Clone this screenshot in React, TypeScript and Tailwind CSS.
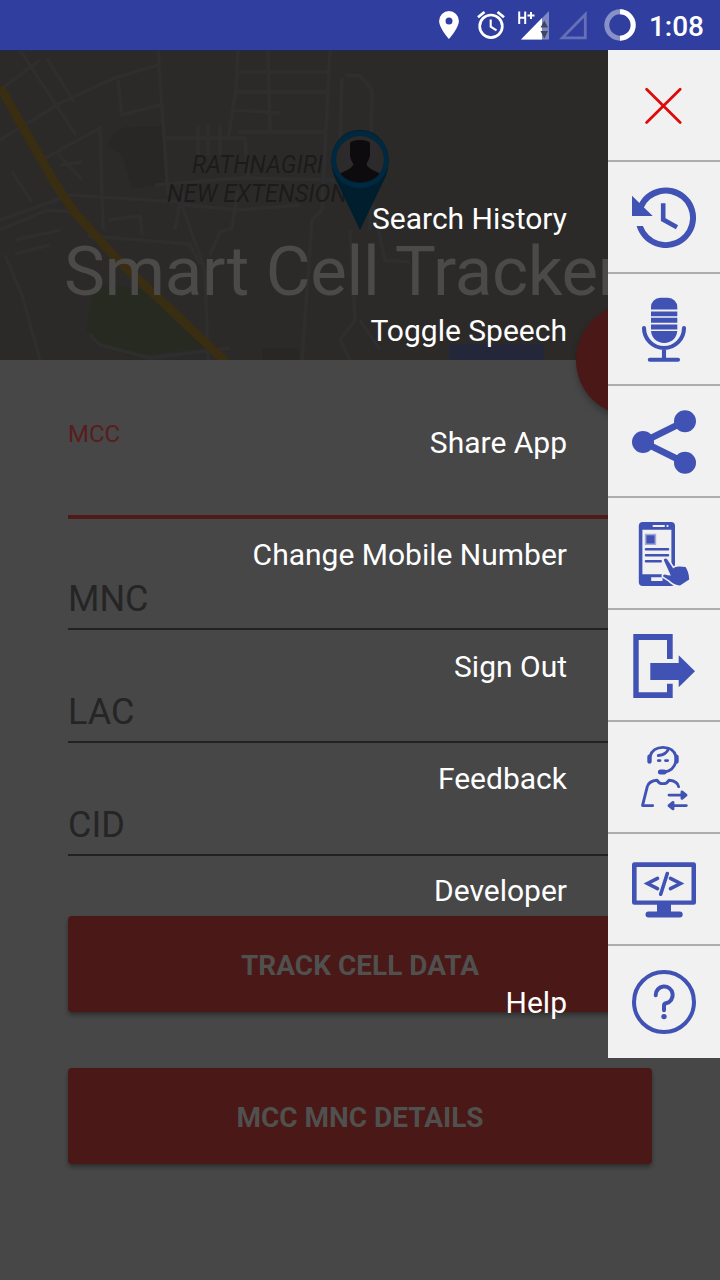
import React from "react";

const ICON = "w-16 h-16 overflow-visible";
const BLUE = "#4052b4";

function CloseIcon() {
    return (
        <svg viewBox="0 0 64 64" className={ICON} stroke="#dd0b0b" strokeWidth="2.8" strokeLinecap="round">
            <path d="M14.6 15.2 48.2 48.6M48.2 15.2 14.6 48.6" />
        </svg>
    );
}

function HistoryIcon() {
    return (
        <svg viewBox="0 0 64 64" className={ICON} fill={BLUE}>
            <path d="M4.6 40A30.3 30.3 0 1 0 6 19.5L11.6 21.9A24.3 24.3 0 1 1 10.9 40Z" />
            <path d="M0 9.7V30H20.7Z" />
            <path d="M31.2 17.3V33.6L45 41.3" fill="none" stroke={BLUE} strokeWidth="4.6" />
        </svg>
    );
}

function MicIcon() {
    return (
        <svg viewBox="0 0 64 64" className={ICON} fill={BLUE}>
            <path d="M19 11.5V9A9.3 9.3 0 0 1 28.3 -.3H36A9.3 9.3 0 0 1 45.3 9V11.5Z" />
            <path d="M19 13.4H45.3V18.2H19ZM19 19.8H45.3V24.8H19ZM19 26.5H45.3V31.4H19Z" />
            <path d="M19 33.1H45.3C44.5 40.5 39.5 45 32.2 45S19.8 40.5 19 33.1Z" />
            <path d="M12 30A20 20 0 0 0 52 30M32 50V61M17.8 61.8H46" fill="none" stroke={BLUE} strokeWidth="4.1" strokeLinecap="round" />
        </svg>
    );
}

function ShareIcon() {
    return (
        <svg viewBox="0 0 64 64" className={ICON} fill={BLUE}>
            <path d="M53 11.3 11 32 53 52.7" fill="none" stroke={BLUE} strokeWidth="6.6" />
            <circle cx="53" cy="11.3" r="11" />
            <circle cx="11" cy="32" r="11" />
            <circle cx="53" cy="52.7" r="11" />
        </svg>
    );
}

function PhoneIcon() {
    return (
        <svg viewBox="0 0 64 64" className={ICON} fill={BLUE}>
            <rect x="6.8" width="36.2" height="64" rx="4" />
            <path d="M10.4 7.8H39.4V52.2H10.4ZM19.2 55.2H30.5V59H19.2Z" fill="#f1f1f1" />
            <path d="M21.5 4H32M35.4 4H35.6" stroke="#f1f1f1" strokeWidth="2" strokeLinecap="round" />
            <path d="M12.8 11.8H24.2V23H12.8Z" fill="#a3aad8" />
            <path d="M14.4 13.3H22.6V21.5H14.4Z" />
            <path d="M14 27.3H36M14 33.2H36M14 39.2H28.7" stroke={BLUE} strokeWidth="2.6" strokeLinecap="round" />
            <path
                d="M32 38.4C31.6 36.6 34 35.9 35.1 37.3L41.3 46.4C43 45 45 44.3 47.6 44.5L53.6 45.1C55.5 48 57 52 57.2 57.5L48 63.4C44 63.200 40.500 61.500 37.500 58.500L31.200 54.500C30.800 52.400 32.500 51.800 35.500 53.300L38.800 53.600Z"
                stroke="#f1f1f1"
                strokeWidth="3.2"
                strokeLinejoin="round"
                paintOrder="stroke"
            />
        </svg>
    );
}

function SignOutIcon() {
    return (
        <svg viewBox="0 0 64 64" className={ICON} fill={BLUE}>
            <path d="M1.3 0H40.7V25H35V6H6.7V58.3H35V49.7H40.7V64H1.3Z" />
            <path d="M18.3 29H46.7V21.3L63 37.3 46.7 53.3V46H18.3Z" />
        </svg>
    );
}

function FeedbackIcon() {
    return (
        <svg viewBox="0 0 64 64" className={ICON} fill="none" stroke={BLUE} strokeWidth="2.9" strokeLinecap="round" strokeLinejoin="round">
            <path d="M18 10.5C19.5 4.8 24.5 1.4 31 1.4S42.5 4.8 44 10.5" />
            <path d="M43.800 16C42.500 21 38.500 25 33 26" />
            <path d="M36.500 2.700C35 6.800 31 9 26.300 9.500M26.300 14.600H28M33.500 14.600H35.600" />
            <path d="M17.500 10.800V15.600M44.500 10.800V15.600" strokeWidth="4.4" />
            <path d="M28.4 25.900H32" strokeWidth="5" />
            <path d="M20.7 59.6H10.500L15.3 40.5C16.3 36.800 20 34.700 25 34.200 27.500 38.800 34.500 38.800 37 34.200 42 34.700 46 36.500 46.600 40.600" />
            <path d="M37 49.1H50M41 59.6H54.3" />
            <path d="M50 46 54 49.1 50 52.3ZM41 56.4 37 59.6 41 62.8Z" fill={BLUE} />
        </svg>
    );
}

function DeveloperIcon() {
    return (
        <svg viewBox="0 0 64 64" className={ICON} fill={BLUE}>
            <path fillRule="evenodd" d="M2.5 4.3H61.5A2.5 2.5 0 0 1 64 6.8V44.2A2.5 2.5 0 0 1 61.5 46.7H2.5A2.5 2.5 0 0 1 0 44.2V6.8A2.5 2.5 0 0 1 2.5 4.3ZM4.6 9V42.6H59.5V9Z" />
            <path d="M25 46H39V54H25Z" />
            <rect x="13.5" y="53.6" width="37.2" height="6" rx="3" />
            <path d="M25.5 20.3 15.5 25.5 25.5 30.7M38.5 20.3 48.5 25.5 38.5 30.7M35.3 15.5 28.7 36.2" fill="none" stroke={BLUE} strokeWidth="3.6" strokeLinecap="round" />
        </svg>
    );
}

function HelpIcon() {
    return (
        <svg viewBox="0 0 64 64" className={ICON} fill="none" stroke={BLUE} strokeWidth="4" strokeLinecap="round" strokeLinejoin="round">
            <circle cx="32" cy="32" r="30" />
            <path d="M23.7 25.3A8.5 8.5 0 1 1 34 33.3C32.6 33.6 32 34 32 35.5V40.3" />
            <circle cx="32" cy="46.6" r="2.7" fill={BLUE} stroke="none" />
        </svg>
    );
}

const menuItems = [
    { label: "", icon: <CloseIcon /> },
    { label: "Search History", icon: <HistoryIcon /> },
    { label: "Toggle Speech", icon: <MicIcon /> },
    { label: "Share App", icon: <ShareIcon /> },
    { label: "Change Mobile Number", icon: <PhoneIcon /> },
    { label: "Sign Out", icon: <SignOutIcon /> },
    { label: "Feedback", icon: <FeedbackIcon /> },
    { label: "Developer", icon: <DeveloperIcon /> },
    { label: "Help", icon: <HelpIcon /> },
];

function StatusBar() {
    return (
        <div className="flex h-[50px] items-center justify-end bg-[#303f9f] pr-4">
            <svg viewBox="0 0 20 28" className="mr-[18px] h-7 w-5" fill="#fff">
                <path fillRule="evenodd" d="M10 0A9.9 9.9 0 0 0 .1 9.9C.1 17 10 28 10 28S19.9 17 19.9 9.9A9.9 9.9 0 0 0 10 0ZM10 6.4A3.5 3.5 0 1 1 10 13.4 3.5 3.5 0 0 1 10 6.4Z" />
            </svg>
            <svg viewBox="0 0 28 28" className="mr-3 h-7 w-7" fill="none" stroke="#fff" strokeWidth="2.7">
                <circle cx="14" cy="15.3" r="11.3" />
                <path d="M1 6.3 7.5 1M27 6.3 20.5 1" />
                <path d="M13.7 8.5V15.7L19.5 19.3" strokeWidth="2.1" />
            </svg>
            <svg viewBox="0 0 33 30" className="mr-[9px] h-[30px] w-[33px]">
                <path d="M4 29.5 32 1V29.5Z" fill="#7f88c3" />
                <path d="M4 29.5 25 8V29.5Z" fill="#fff" />
                <path d="M23.5 17.5 27.3 10.5 31 17.5ZM23.5 21 27.3 28.5 31 21Z" fill="#41465f" />
                <path d="M2.2 1.5V14M8.2 1.5V14M2.2 7.7H8.2M10.5 5.5H17.5M14 2V9" fill="none" stroke="#fff" strokeWidth="2" />
            </svg>
            <svg viewBox="0 0 29 30" className="mr-4 h-[30px] w-[29px]" fill="none" stroke="#6570b7" strokeWidth="2.8">
                <path d="M3.3 27.8H26.3V4.4Z" />
            </svg>
            <svg viewBox="0 0 32 32" className="mr-[13px] h-8 w-8" fill="none" strokeWidth="5">
                <circle cx="16" cy="16" r="13.2" stroke="#8890c8" />
                <path d="M16 2.8A13.2 13.2 0 0 1 16 29.2" stroke="#fff" />
            </svg>
            <span className="pt-[3px] text-[28px] leading-none font-medium text-white">1:08</span>
        </div>
    );
}

function MapBanner() {
    return (
        <svg viewBox="0 0 720 310" className="absolute inset-0 h-[310px] w-[720px]">
            <rect width="720" height="310" fill="#2c2a29" />
            <path d="M112 85 125 77 162 76 168 135 132 138 122 105 108 96Z" fill="#282726" />
            <path d="M94 238 105 235 150 240 206 298 130 306 100 293 86 280Z" fill="#272a21" />
            <path d="M262 298H299V310H262Z" fill="#292725" />
            <path d="M449 294H544V310H449Z" fill="#24263a" />
            {/* Minor streets */}
            <g fill="none" stroke="#2f2e2e" strokeWidth="3.5">
                <path d="M20 0 76 85M47 8 74 52M0 40 40 10M0 90 26 74 62 52 115 28 158 15M158 0 168 145M118 30 122 65 160 55M42 110 100 78 103 180M58 104 82 130M12 122 32 152M60 115 82 112" />
                <path d="M0 170 70 145 180 152 175 180M0 180 48 160 75 162M15 190 60 180M15 204 50 195M5 205 22 245 40 310M88 186 190 194 200 215M180 150 205 220 208 310M108 170 140 166 142 185M155 135 240 128 335 130" />
                <path d="M238 0 236 40 228 90M236 22H330M236 42 328 42M234 60 280 63M268 0 270 80M330 0 322 160 312 170 302 310M342 28 340 90 355 130M345 25 360 26 372 40 370 180M238 82H325M165 88H245L248 130M198 75V105M208 75V105M220 75V105" />
                <path d="M238 140 232 178 220 182 210 205M180 133 185 155 240 160 300 155M350 180 355 270 340 290 350 310M372 150 385 210 410 212M90 285 100 295 150 308 230 298M360 270 380 300" />
            </g>
            <path d="M0 37 20 72 56 135 76 164 118 210 225 311" fill="none" stroke="#392d12" strokeWidth="9" />
            <g fill="#1c1b1b" fontFamily="Roboto, sans-serif" fontSize="25" fontStyle="italic">
                <text x="192" y="123" textLength="131" lengthAdjust="spacingAndGlyphs">RATHNAGIRI</text>
                <text x="167" y="152" textLength="180" lengthAdjust="spacingAndGlyphs">NEW EXTENSION</text>
            </g>
            {/* Person pin */}
            <path d="M360 180 334 126C326 104 337 80 360 80S394 104 386 126Z" fill="#001e2e" />
            <circle cx="360" cy="109.5" r="26.3" fill="none" stroke="#00283e" strokeWidth="5" />
            <path d="M360 86A23.7 23.7 0 0 1 379.5 123.5C368 118 352 118 340.5 123.5A23.7 23.7 0 0 1 360 86Z" fill="#2c2a2a" />
            <path d="M350 93C352 89 368 89 370 93V106C369 110 367 112 366.5 114 368 119 374 120 379.5 123.5 372 135 348 135 340.5 123.5 346 120 352 119 353.5 114 352 112 351 110 350 106Z" fill="#0d0b0d" />
            <path d="M0 .5H720" stroke="#1f2c48" />
        </svg>
    );
}

export default function App() {
    return (
        <main className="relative h-[1280px] w-[720px] overflow-hidden bg-[#474747] font-[Roboto,sans-serif]">
            <StatusBar />

            {/* Header */}
            <header className="relative flex h-[310px] items-end pb-14 pl-16">
                <MapBanner />
                <h1 className="relative text-[69px] leading-[64px] tracking-[-0.35px] whitespace-nowrap text-[#4b4a49]">Smart Cell Tracker</h1>
                <div className="absolute top-[254px] left-[576px] h-28 w-28 rounded-full bg-[#4a1817] shadow-[0_4px_6px_rgba(0,0,0,0.25)]"></div>
            </header>

            {/* Cell form */}
            <section className="flex flex-col px-[68px] pt-[60px]">
                <div className="h-[99px] border-b-4 border-[#4f1b1a] text-2xl leading-7 text-[#581d1e]">MCC</div>
                {["MNC", "LAC", "CID"].map((field, index) => (
                    <div
                        key={index}
                        className={`flex items-end border-b-2 border-[#222] pb-2 text-4xl leading-[42px] text-[#252525] ${index === 0 ? "h-[111px]" : "h-[113px]"}`}
                    >
                        {field}
                    </div>
                ))}
                <div className="mt-[60px] flex flex-col gap-14">
                    {["TRACK CELL DATA", "MCC MNC DETAILS"].map((title, index) => (
                        <button
                            key={index}
                            className="h-24 rounded bg-[#4a1817] pt-1 text-[28px] font-bold text-[#50504e] shadow-[0_3px_4px_rgba(0,0,0,0.35)]"
                        >
                            {title}
                        </button>
                    ))}
                </div>
            </section>

            {/* Context menu */}
            <nav className="absolute top-[50px] right-0 flex flex-col">
                {menuItems.map((item, index) => (
                    <div key={index} className="flex h-28 items-center justify-end">
                        <span className="pt-0.5 pr-[41px] text-[30px] leading-9 text-white">{item.label}</span>
                        <div
                            className={`flex h-28 w-28 justify-center bg-[#f1f1f1] pt-6 ${index < menuItems.length - 1 ? "border-b-2 border-[#adadad]" : ""}`}
                        >
                            {item.icon}
                        </div>
                    </div>
                ))}
            </nav>
        </main>
    );
}
